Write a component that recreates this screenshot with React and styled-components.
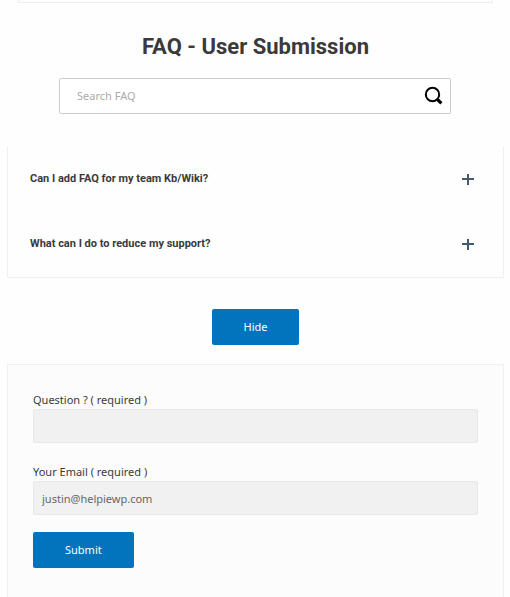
import React from "react";
import styled, { createGlobalStyle } from "styled-components";

const GlobalStyle = createGlobalStyle`
  *, *::before, *::after { box-sizing: border-box; }
  body {
    margin: 0;
    background: #fefefe;
    color: #3a3a3a;
    font-family: "Noto Sans", "Open Sans", sans-serif;
    font-size: 11px;
    line-height: 16px;
  }
`;

const Page = styled.main`
  display: flex;
  flex-direction: column;
  min-height: 100vh;
  padding: 0 6px 0 7px;
`;

const PreviousPanel = styled.div`
  height: 3px;
  margin: 0 11px;
  border: 1px solid #ededed;
  border-top: 0;
`;

const Title = styled.h1`
  margin: 28px 0 15px;
  text-align: center;
  color: #3a3a3a;
  font: 700 22px/32px Roboto, sans-serif;
`;

const SearchBar = styled.form`
  display: flex;
  align-items: center;
  height: 36px;
  margin: 0 53px 0 52px;
  padding: 0 6px 0 17px;
  background: #fff;
  border: 1px solid #cccccc;
  border-radius: 2px;
`;

const SearchInput = styled.input`
  flex: 1;
  min-width: 0;
  padding: 0;
  border: 0;
  outline: 0;
  background: transparent;
  color: #3a3a3a;
  font: inherit;
  &::placeholder { color: #aaaaaa; opacity: 1; }
`;

const SearchButton = styled.button`
  display: flex;
  padding: 0;
  border: 0;
  background: transparent;
  cursor: pointer;
`;

const Accordion = styled.section`
  margin-top: 32px;
  padding-bottom: 1px;
  border: 1px solid #f0f0f0;
  border-top: 0;
`;

const Heading = styled.h2`
  margin: 0;
`;

const AccordionRow = styled.button`
  display: flex;
  align-items: center;
  justify-content: space-between;
  width: 100%;
  height: 65px;
  padding: 0 29px 0 22px;
  border: 0;
  background: transparent;
  color: #3a3a3a;
  font: 700 11px/16px Roboto, sans-serif;
  text-align: left;
  cursor: pointer;
`;

const Button = styled.button`
  align-self: flex-start;
  min-height: 36px;
  padding: 10px 32px;
  border: 0;
  border-radius: 2px;
  background: #0274be;
  color: #fff;
  font: inherit;
  cursor: pointer;
`;

const Toggle = styled.div`
  display: flex;
  justify-content: center;
  padding: 31px 0 19px;
`;

const SubmissionForm = styled.form`
  display: flex;
  flex: 1;
  flex-direction: column;
  padding: 27px 25px 30px;
  background: #fcfcfc;
  border: 1px solid #f0f0f0;
  border-bottom: 0;
`;

const Field = styled.div`
  display: flex;
  flex-direction: column;
  gap: 1px;
  margin-bottom: ${(p) => (p.$last ? 17 : 21)}px;
`;

const Label = styled.label`
  color: #3a3a3a;
`;

const TextInput = styled.input`
  width: 100%;
  height: 34px;
  padding: 0 8px;
  border: 1px solid #e8e8e8;
  border-radius: 2px;
  background: #f1f1f1;
  color: #666666;
  font: inherit;
`;

const SearchIcon = () => (
  <svg width="20" height="20" viewBox="0 0 20 20" fill="none" stroke="#000" aria-hidden="true">
    <circle cx="8.5" cy="8.5" r="6.7" strokeWidth="2" />
    <path d="M13 13l1.5 1.5" strokeWidth="2.4" />
    <path d="M14 14l3.4 3.4" strokeWidth="3.2" />
  </svg>
);

const PlusIcon = () => (
  <svg width="12" height="12" viewBox="0 0 12 12" fill="#44596b" aria-hidden="true">
    <rect x="0" y="5" width="12" height="2" />
    <rect x="5" y="1" width="2" height="11" />
  </svg>
);

const questions = [
  "Can I add FAQ for my team Kb/Wiki?",
  "What can I do to reduce my support?",
];

const stop = (event) => event.preventDefault();

export default function App() {
  return (
    <>
      <GlobalStyle />
      <Page>
        <PreviousPanel />
        <Title>FAQ - User Submission</Title>
        <SearchBar role="search" onSubmit={stop}>
          <SearchInput type="text" placeholder="Search FAQ" aria-label="Search FAQ" />
          <SearchButton type="submit" aria-label="Search">
            <SearchIcon />
          </SearchButton>
        </SearchBar>
        <Accordion>
          {questions.map((question) => (
            <Heading key={question}>
              <AccordionRow type="button" aria-expanded="false">
                {question}
                <PlusIcon />
              </AccordionRow>
            </Heading>
          ))}
        </Accordion>
        <Toggle>
          <Button type="button">Hide</Button>
        </Toggle>
        <SubmissionForm onSubmit={stop}>
          <Field>
            <Label htmlFor="question">Question ? ( required )</Label>
            <TextInput id="question" type="text" required />
          </Field>
          <Field $last>
            <Label htmlFor="email">Your Email ( required )</Label>
            <TextInput id="email" type="email" defaultValue="justin@helpiewp.com" required />
          </Field>
          <Button type="submit">Submit</Button>
        </SubmissionForm>
      </Page>
    </>
  );
}
